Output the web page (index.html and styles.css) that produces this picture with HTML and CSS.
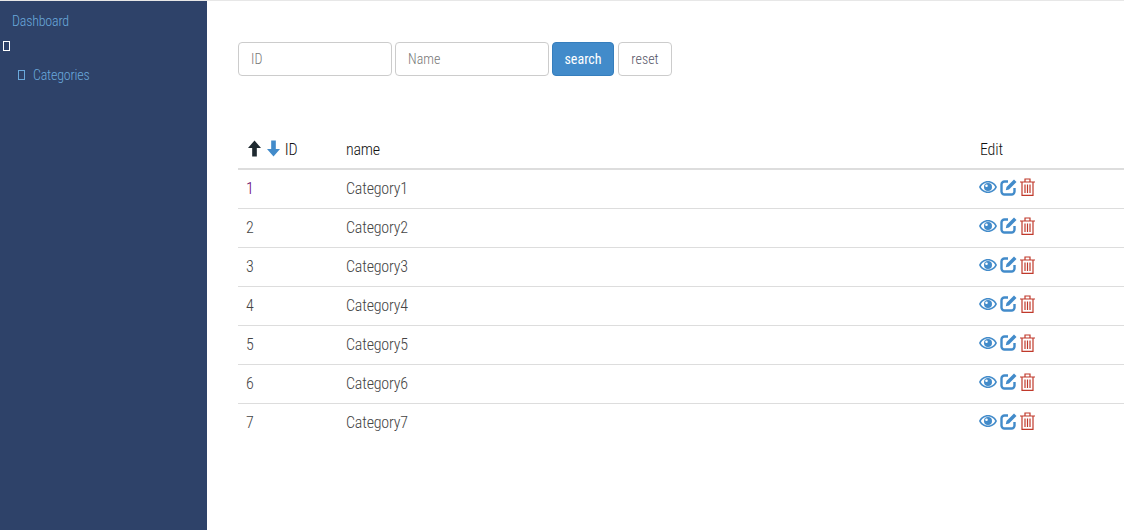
FILE: index.html
```html
<!DOCTYPE html>
<html lang="en">
<head>
    <meta charset="UTF-8">
    <title>Categories</title>
    <link rel="stylesheet" href="styles.css">
</head>
<body>
    <svg class="defs" width="0" height="0">
        <symbol id="eye" viewBox="0 0 18 12"><path fill="#428bca" fill-rule="evenodd" d="M9 0C13 0 16.5 2.500 18 6 16.500 9.500 13 12 9 12 5 12 1.500 9.500 0 6 1.500 2.500 5 0 9 0ZM9 1.500C6 1.500 3.300 3.200 1.800 6 3.300 8.800 6 10.500 9 10.500 12 10.500 14.700 8.800 16.200 6 14.700 3.200 12 1.500 9 1.500ZM9 2A4 4 0 1 1 9 10 4 4 0 0 1 9 2ZM7.500 3.500A1.300 1.300 0 1 0 7.500 6.100 1.300 1.300 0 0 0 7.500 3.500Z"/></symbol>
        <symbol id="edit" viewBox="0 0 17 17"><path fill="none" stroke="#428bca" stroke-width="2.400" d="M8 2.500H4.500A3 3 0 0 0 1.500 5.500V12.500A3 3 0 0 0 4.500 15.500H11.500A3 3 0 0 0 14.500 12.500V9"/><path fill="#428bca" d="M14 .5 16.500 3 9 10.500 5.800 11.200 6.500 8Z"/></symbol>
        <symbol id="trash" viewBox="0 0 15 18"><path fill="none" stroke="#c0392b" stroke-width="1.200" d="M0 4H15M5 4V1H10V4M2 4V17.300H13V4M5 6.500V15M7.500 6.500V15M10 6.500V15"/></symbol>
    </svg>
    <div class="sidebar">
        <a class="dash" href="#">Dashboard</a>
        <div class="mark-row"><span class="box box-white"></span></div>
        <a class="cat-link" href="#"><span class="box box-blue"></span>Categories</a>
    </div>
    <div class="main">
        <form class="search">
            <input type="text" placeholder="ID">
            <input type="text" placeholder="Name">
            <button type="button" class="btn btn-search">search</button>
            <button type="button" class="btn btn-reset">reset</button>
        </form>
        <table class="list">
            <thead>
                <tr>
                    <th class="col-id">
                        <span class="sort">
                            <svg class="arrow-up" width="13" height="17" viewBox="0 0 14 17"><path fill="#1f2a30" d="M7 0 14 8H9.500V17H4.500V8H0Z"/></svg>
                            <svg width="13" height="17" viewBox="0 0 14 17"><path fill="#428bca" d="M7 17 14 9H9.500V0H4.500V9H0Z"/></svg>
                        </span>ID
                    </th>
                    <th class="col-name">name</th>
                    <th class="col-edit">Edit</th>
                </tr>
            </thead>
            <tbody>
                <tr>
                    <td class="visited">1</td><td>Category1</td>
                    <td class="actions"><svg class="ic" width="18" height="12"><use href="#eye"/></svg><svg class="ic" width="17" height="17"><use href="#edit"/></svg><svg class="ic" width="15" height="18"><use href="#trash"/></svg></td>
                </tr>
                <tr>
                    <td>2</td><td>Category2</td>
                    <td class="actions"><svg class="ic" width="18" height="12"><use href="#eye"/></svg><svg class="ic" width="17" height="17"><use href="#edit"/></svg><svg class="ic" width="15" height="18"><use href="#trash"/></svg></td>
                </tr>
                <tr>
                    <td>3</td><td>Category3</td>
                    <td class="actions"><svg class="ic" width="18" height="12"><use href="#eye"/></svg><svg class="ic" width="17" height="17"><use href="#edit"/></svg><svg class="ic" width="15" height="18"><use href="#trash"/></svg></td>
                </tr>
                <tr>
                    <td>4</td><td>Category4</td>
                    <td class="actions"><svg class="ic" width="18" height="12"><use href="#eye"/></svg><svg class="ic" width="17" height="17"><use href="#edit"/></svg><svg class="ic" width="15" height="18"><use href="#trash"/></svg></td>
                </tr>
                <tr>
                    <td>5</td><td>Category5</td>
                    <td class="actions"><svg class="ic" width="18" height="12"><use href="#eye"/></svg><svg class="ic" width="17" height="17"><use href="#edit"/></svg><svg class="ic" width="15" height="18"><use href="#trash"/></svg></td>
                </tr>
                <tr>
                    <td>6</td><td>Category6</td>
                    <td class="actions"><svg class="ic" width="18" height="12"><use href="#eye"/></svg><svg class="ic" width="17" height="17"><use href="#edit"/></svg><svg class="ic" width="15" height="18"><use href="#trash"/></svg></td>
                </tr>
                <tr>
                    <td>7</td><td>Category7</td>
                    <td class="actions"><svg class="ic" width="18" height="12"><use href="#eye"/></svg><svg class="ic" width="17" height="17"><use href="#edit"/></svg><svg class="ic" width="15" height="18"><use href="#trash"/></svg></td>
                </tr>
            </tbody>
        </table>
    </div>
</body>
</html>
```
FILE: styles.css
```css
body {
    font-family: Roboto, sans-serif;
    font-stretch: 75%;
    font-weight: 300;
    font-size: 15px;
    margin: 0;
    padding: 0;
    color: #333;
    display: flex;
    height: 530px;
    overflow: hidden;
    border-top: 1px solid #e7e7e7;
    box-sizing: border-box;
}
.defs {
    position: absolute;
}
.sidebar {
    width: 207px;
    flex: none;
    background-color: #2e4269;
    color: #6aa9dc;
    font-size: 14px;
    letter-spacing: -0.2px;
}
.sidebar a {
    color: #6aa9dc;
    text-decoration: none;
    display: flex;
    align-items: center;
}
.dash {
    padding: 11px 0 0 12px;
    height: 18px;
}
.mark-row {
    display: flex;
    margin-top: 11px;
    padding-left: 3px;
    height: 11px;
}
.box {
    display: block;
    box-sizing: border-box;
    width: 7px;
    height: 10px;
    border: 1px solid #fff;
}
.box-blue {
    border-color: #6aa9dc;
    margin-right: 8px;
}
.cat-link {
    margin-top: 14px;
    padding-left: 18px;
    height: 18px;
}
.main {
    flex: 1;
    padding: 41px 0 0 31px;
    min-width: 0;
}
.search {
    display: flex;
    gap: 3px;
    height: 34px;
}
.search input {
    width: 154px;
    box-sizing: border-box;
    border: 1px solid #ccc;
    border-radius: 4px;
    padding: 0 12px;
    font: inherit;
    font-size: 14px;
}
.search input::placeholder {
    color: #777;
}
.btn {
    font: inherit;
    font-size: 14px;
    border-radius: 4px;
    padding: 0;
    cursor: pointer;
}
.btn-search {
    width: 62px;
    background-color: #428bca;
    border: 1px solid #357ebd;
    color: #fff;
    font-weight: 400;
    margin-right: 1px;
}
.btn-reset {
    width: 54px;
    background-color: #fff;
    border: 1px solid #ccc;
    color: #556;
}
.list {
    width: 100%;
    margin-top: 54px;
    border-collapse: collapse;
}
.list th {
    text-align: left;
    font-weight: 300;
    font-size: 16px;
    letter-spacing: -0.2px;
    color: #111;
    height: 39px;
    padding: 0 8px;
    border-bottom: 2px solid #ddd;
    box-sizing: border-box;
}
.list td {
    height: 39px;
    padding: 0 8px;
    border-bottom: 1px solid #ddd;
    box-sizing: border-box;
    color: #444;
    font-size: 16px;
    letter-spacing: -0.2px;
}
.list tr:last-child td {
    border-bottom: none;
}
.col-id {
    width: 100px;
}
.col-edit {
    width: 152px;
}
.sort {
    margin-left: 2px;
    margin-right: 1px;
}
.sort svg {
    vertical-align: -2px;
}
.arrow-up {
    margin-right: 3px;
}
.list td.visited {
    color: #660066;
}
.list td.actions {
    padding-bottom: 5px;
    padding-left: 7px;
}
.ic {
    vertical-align: middle;
    margin-right: 3px;
}
```
